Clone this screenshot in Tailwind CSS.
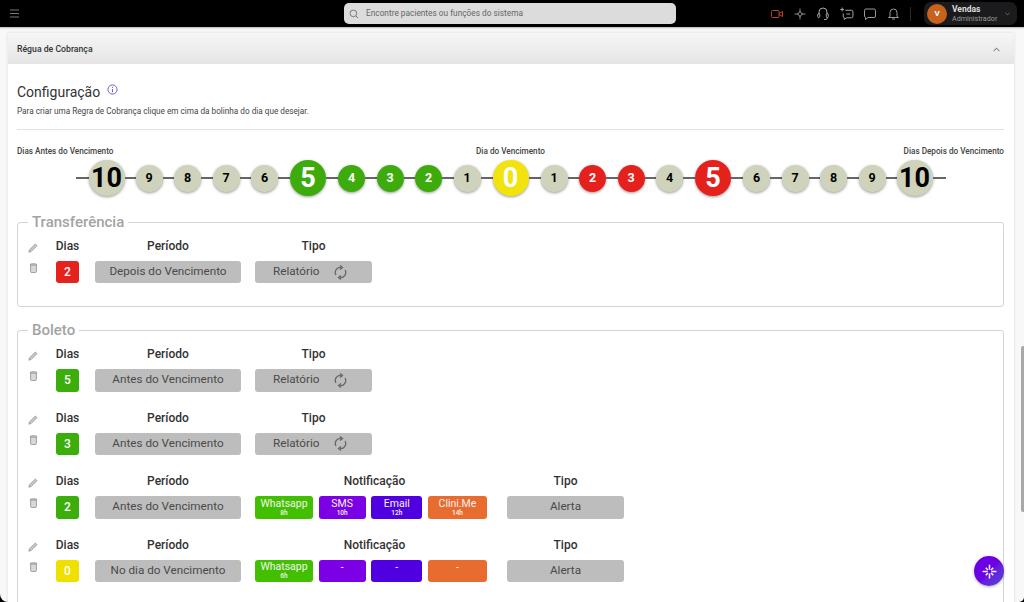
<!DOCTYPE html>
<html lang="pt-BR">
<head>
<meta charset="utf-8">
<title>Régua de Cobrança</title>
<script src="https://cdn.jsdelivr.net/npm/@tailwindcss/browser@4"></script>
</head>
<body class="w-[1024px] h-[602px] overflow-hidden bg-black font-['Roboto',sans-serif]">
<div class="relative flex flex-col h-[602px] overflow-hidden">
  <header class="flex items-center h-[27px] shrink-0 bg-black">
    <svg class="ml-[10px] w-[9px] h-[9px] text-[#777]" viewBox="0 0 9 9" fill="none" stroke="currentColor" stroke-width="1"><path d="M0 1h9M0 4.5h9M0 8h9"/></svg>
    <div class="ml-[325px] flex items-center w-[332px] h-[21px] rounded-[5px] bg-[#dcdcdc] pl-[5px]">
      <svg class="w-[10px] h-[10px] text-[#666]" viewBox="0 0 24 24" fill="none" stroke="currentColor" stroke-width="2"><circle cx="10.5" cy="10.5" r="8"/><path d="M16.5 16.5L22 22"/></svg>
      <span class="ml-[7px] text-[8.3px] text-[#666]">Encontre pacientes ou funções do sistema</span>
    </div>
    <div class="ml-[95px] flex items-center">
      <svg class="w-[12px] h-[10px] text-[#b5432c]" viewBox="0 0 12 10" fill="none" stroke="currentColor" stroke-width="1"><rect x="0.5" y="1.5" width="7.5" height="7" rx="1"/><path d="M8 4.5L11.500 2.500V7.500L8 5.500"/></svg>
      <svg class="ml-[11px] w-[12px] h-[12px] text-[#999]" viewBox="0 0 24 24" fill="none" stroke="currentColor" stroke-width="1.8"><path d="M12 1v5M12 18v5M1 12h5M18 12h5M12 6l2 4 4 2-4 2-2 4-2-4-4-2 4-2z"/></svg>
      <svg class="ml-[11px] w-[12px] h-[13px] text-[#aaa]" viewBox="0 0 24 26" fill="none" stroke="currentColor" stroke-width="2"><path d="M4 15V10a8 8 0 0116 0v5"/><rect x="1.500" y="13" width="4" height="8" rx="2"/><rect x="18.500" y="13" width="4" height="8" rx="2"/><path d="M20.500 21v1a3 3 0 01-3 3H14"/></svg>
      <svg class="ml-[11px] w-[14px] h-[13px] text-[#aaa]" viewBox="0 0 26 24" fill="none" stroke="currentColor" stroke-width="1.800"><path d="M10 6h11a3 3 0 013 3v8a3 3 0 01-3 3H12l-4 3v-3a3 3 0 01-2-3v-5"/><path d="M4 1v7M.5 4.500h7M12 13h7"/></svg>
      <svg class="ml-[10px] w-[12px] h-[12px] text-[#aaa]" viewBox="0 0 24 24" fill="none" stroke="currentColor" stroke-width="1.800"><path d="M4 2h16a3 3 0 013 3v11a3 3 0 01-3 3H8l-5 4v-4.200A3 3 0 011 16V5a3 3 0 013-3z"/></svg>
      <svg class="ml-[12px] w-[11px] h-[12px] text-[#aaa]" viewBox="0 0 22 24" fill="none" stroke="currentColor" stroke-width="1.800"><path d="M4 17V9a7 7 0 0114 0v8l3 2H1zM8 22h6"/></svg>
      <span class="ml-[11px] w-px h-[14px] bg-[#2a2a2a]"></span>
    </div>
    <div class="ml-[13px] flex items-center w-[93px] h-[23px] rounded-[7px] bg-[#1b1b1d] pl-[3px]">
      <span class="flex items-center justify-center w-[20px] h-[20px] rounded-full bg-[#c8621f] text-white text-[8px] font-bold">V</span>
      <div class="ml-[5px] flex flex-col leading-[10px]">
        <span class="text-[8.5px] font-bold text-[#ddd]">Vendas</span>
        <span class="text-[7.200px] text-[#999]">Administrador</span>
      </div>
      <svg class="ml-[8px] w-[5px] h-[4px] text-[#777]" viewBox="0 0 6 4" fill="none" stroke="currentColor" stroke-width="1"><path d="M0.500 0.500L3 3l2.500-2.500"/></svg>
    </div>
  </header>

  <main class="flex-1 min-h-0 bg-[#f8f8f8] rounded-bl-[8px] rounded-br-[5px] pl-[8px] pr-[10px] pt-[6px] overflow-hidden shadow-[inset_0_3px_2px_-2px_rgba(0,0,0,0.25)]">
    <section class="bg-white h-[600px] shadow-[0_0_3px_rgba(0,0,0,0.12)]">
      <div class="flex items-center justify-between h-[31px] pl-[9px] pr-[14px] pt-[2px] bg-gradient-to-b from-[#f6f6f6] to-[#e5e5e5]">
        <h2 class="text-[8.7px] font-medium text-[#333]">Régua de Cobrança</h2>
        <svg class="w-[7px] h-[5px] text-[#888]" viewBox="0 0 8 5" fill="none" stroke="currentColor" stroke-width="1.200"><path d="M0.700 4.300L4 1l3.300 3.300"/></svg>
      </div>
      <div class="px-[9px] pr-[10px]">
        <div class="flex items-center mt-[18px] h-[20px]">
          <h1 class="text-[14px] text-[#333] leading-[20px]">Configuração</h1>
          <svg class="ml-[7px] -mt-[5px] w-[11px] h-[11px] text-[#5a55c8]" viewBox="0 0 12 12" fill="none" stroke="currentColor" stroke-width="1"><circle cx="6" cy="6" r="5"/><path d="M6 5.500V9M6 3v1.200"/></svg>
        </div>
        <p class="mt-[2px] text-[8.2px] leading-[14px] text-[#444]">Para criar uma Regra de Cobrança clique em cima da bolinha do dia que desejar.</p>
        <hr class="mt-[11px] border-t border-[#e2e2e2]">
        <div class="grid grid-cols-3 mt-[16px] text-[8.200px] leading-[10px] font-medium text-[#444]">
          <span>Dias Antes do Vencimento</span>
          <span class="text-center">Dia do Vencimento</span>
          <span class="text-right">Dias Depois do Vencimento</span>
        </div>

        <div class="flex items-center justify-center mt-[4px] h-[36px]">
          <i class="w-[13px] h-[2px] bg-[#666]"></i>
          <span class="flex items-center justify-center w-[36px] h-[36px] rounded-full bg-[#d0d3bb] shadow-[0_1px_3px_rgba(0,0,0,0.4)] text-[27px] font-bold text-black">10</span>
          <i class="w-[11px] h-[2px] bg-[#666]"></i>
          <span class="flex items-center justify-center w-[27px] h-[27px] rounded-full bg-[#d0d3bb] shadow-[0_1px_3px_rgba(0,0,0,0.4)] text-[12.500px] font-bold text-black">9</span>
          <i class="w-[11.500px] h-[2px] bg-[#666]"></i>
          <span class="flex items-center justify-center w-[27px] h-[27px] rounded-full bg-[#d0d3bb] shadow-[0_1px_3px_rgba(0,0,0,0.4)] text-[12.500px] font-bold text-black">8</span>
          <i class="w-[11.500px] h-[2px] bg-[#666]"></i>
          <span class="flex items-center justify-center w-[27px] h-[27px] rounded-full bg-[#d0d3bb] shadow-[0_1px_3px_rgba(0,0,0,0.4)] text-[12.500px] font-bold text-black">7</span>
          <i class="w-[11.500px] h-[2px] bg-[#666]"></i>
          <span class="flex items-center justify-center w-[27px] h-[27px] rounded-full bg-[#d0d3bb] shadow-[0_1px_3px_rgba(0,0,0,0.4)] text-[12.500px] font-bold text-black">6</span>
          <i class="w-[12px] h-[2px] bg-[#666]"></i>
          <span class="flex items-center justify-center w-[36px] h-[36px] rounded-full bg-[#3dab0c] shadow-[0_1px_3px_rgba(0,0,0,0.4)] text-[27px] font-bold text-white">5</span>
          <i class="w-[12px] h-[2px] bg-[#666]"></i>
          <span class="flex items-center justify-center w-[27px] h-[27px] rounded-full bg-[#3dab0c] shadow-[0_1px_3px_rgba(0,0,0,0.4)] text-[12.500px] font-bold text-white">4</span>
          <i class="w-[11.500px] h-[2px] bg-[#666]"></i>
          <span class="flex items-center justify-center w-[27px] h-[27px] rounded-full bg-[#3dab0c] shadow-[0_1px_3px_rgba(0,0,0,0.4)] text-[12.500px] font-bold text-white">3</span>
          <i class="w-[11.500px] h-[2px] bg-[#666]"></i>
          <span class="flex items-center justify-center w-[27px] h-[27px] rounded-full bg-[#3dab0c] shadow-[0_1px_3px_rgba(0,0,0,0.4)] text-[12.500px] font-bold text-white">2</span>
          <i class="w-[11.500px] h-[2px] bg-[#666]"></i>
          <span class="flex items-center justify-center w-[27px] h-[27px] rounded-full bg-[#d0d3bb] shadow-[0_1px_3px_rgba(0,0,0,0.4)] text-[12.500px] font-bold text-black">1</span>
          <i class="w-[12px] h-[2px] bg-[#666]"></i>
          <span class="flex items-center justify-center w-[36px] h-[36px] rounded-full bg-[#f2e30c] shadow-[0_1px_3px_rgba(0,0,0,0.4)] text-[27px] font-bold text-white">0</span>
          <i class="w-[12px] h-[2px] bg-[#666]"></i>
          <span class="flex items-center justify-center w-[27px] h-[27px] rounded-full bg-[#d0d3bb] shadow-[0_1px_3px_rgba(0,0,0,0.4)] text-[12.500px] font-bold text-black">1</span>
          <i class="w-[11.500px] h-[2px] bg-[#666]"></i>
          <span class="flex items-center justify-center w-[27px] h-[27px] rounded-full bg-[#e5211d] shadow-[0_1px_3px_rgba(0,0,0,0.4)] text-[12.500px] font-bold text-white">2</span>
          <i class="w-[11.500px] h-[2px] bg-[#666]"></i>
          <span class="flex items-center justify-center w-[27px] h-[27px] rounded-full bg-[#e5211d] shadow-[0_1px_3px_rgba(0,0,0,0.4)] text-[12.500px] font-bold text-white">3</span>
          <i class="w-[11.500px] h-[2px] bg-[#666]"></i>
          <span class="flex items-center justify-center w-[27px] h-[27px] rounded-full bg-[#d0d3bb] shadow-[0_1px_3px_rgba(0,0,0,0.4)] text-[12.500px] font-bold text-black">4</span>
          <i class="w-[12px] h-[2px] bg-[#666]"></i>
          <span class="flex items-center justify-center w-[36px] h-[36px] rounded-full bg-[#e5211d] shadow-[0_1px_3px_rgba(0,0,0,0.4)] text-[27px] font-bold text-white">5</span>
          <i class="w-[12px] h-[2px] bg-[#666]"></i>
          <span class="flex items-center justify-center w-[27px] h-[27px] rounded-full bg-[#d0d3bb] shadow-[0_1px_3px_rgba(0,0,0,0.4)] text-[12.500px] font-bold text-black">6</span>
          <i class="w-[11.500px] h-[2px] bg-[#666]"></i>
          <span class="flex items-center justify-center w-[27px] h-[27px] rounded-full bg-[#d0d3bb] shadow-[0_1px_3px_rgba(0,0,0,0.4)] text-[12.500px] font-bold text-black">7</span>
          <i class="w-[11.500px] h-[2px] bg-[#666]"></i>
          <span class="flex items-center justify-center w-[27px] h-[27px] rounded-full bg-[#d0d3bb] shadow-[0_1px_3px_rgba(0,0,0,0.4)] text-[12.500px] font-bold text-black">8</span>
          <i class="w-[11.500px] h-[2px] bg-[#666]"></i>
          <span class="flex items-center justify-center w-[27px] h-[27px] rounded-full bg-[#d0d3bb] shadow-[0_1px_3px_rgba(0,0,0,0.4)] text-[12.500px] font-bold text-black">9</span>
          <i class="w-[11px] h-[2px] bg-[#666]"></i>
          <span class="flex items-center justify-center w-[36px] h-[36px] rounded-full bg-[#d0d3bb] shadow-[0_1px_3px_rgba(0,0,0,0.4)] text-[27px] font-bold text-black">10</span>
          <i class="w-[13px] h-[2px] bg-[#666]"></i>
        </div>

        <fieldset class="mt-[16px] h-[95px] border border-[#d4d4d4] rounded-[3px] pl-[9px]">
          <legend class="ml-[1px] px-[4px] text-[15px] leading-[20px] font-medium text-[#a3a3a3]">Transferência</legend>
          <div class="flex h-[47px] mt-[4px]">
            <div class="flex flex-col items-center w-[12px] mr-[17px] pt-[7px]">
              <svg class="w-[10px] h-[10px] text-[#8f8f8f]" viewBox="0 0 12 12" fill="#c9c9c9" stroke="currentColor" stroke-width="0.900"><path d="M8.800 1.200l2 2-7 7L1 11l.800-2.800z"/></svg>
              <svg class="mt-[10px] w-[9px] h-[10px] text-[#8f8f8f]" viewBox="0 0 10 12" fill="#d8d8d8" stroke="currentColor" stroke-width="1"><path d="M1.500 2.500h7v7.500a1.500 1.500 0 01-1.500 1.500H3A1.500 1.500 0 011.500 10zM1 2.500a1.500 1.500 0 011.500-1.500h5A1.500 1.500 0 019 2.500"/></svg>
            </div>
            <div class="flex flex-col items-center w-[23px] mr-[16px]"><span class="h-[21px] leading-[21px] text-[12px] font-medium text-[#333]">Dias</span><span class="flex items-center justify-center mt-[4px] w-[23px] h-[23px] rounded-[3px] bg-[#e5231e] text-white text-[12px] font-medium">2</span></div>
            <div class="flex flex-col items-center w-[146px] mr-[14px]"><span class="h-[21px] leading-[21px] text-[12px] font-medium text-[#333]">Período</span><span class="flex items-center justify-center mt-[4px] w-full h-[23px] rounded-[3px] bg-[#bdbdbd] text-[#4a4a4a] text-[11.700px]">Depois do Vencimento</span></div>
            <div class="flex flex-col items-center w-[117px]"><span class="h-[21px] leading-[21px] text-[12px] font-medium text-[#333]">Tipo</span><span class="flex items-center gap-[15px] pl-[18px] mt-[4px] w-full h-[23px] rounded-[3px] bg-[#bdbdbd] text-[#4a4a4a] text-[11.700px]">Relatório<svg class="w-[13px] h-[15px] text-[#666]" viewBox="0 0 13 15" fill="none" stroke="currentColor" stroke-width="1.300"><path d="M2 10A5 5 0 0 1 7 2.500"/><path d="M6 .5l2.500 2-2.500 2" /><path d="M11 5A5 5 0 0 1 6 12.500"/><path d="M7 10.500l-2.500 2 2.500 2"/></svg></span></div>
          </div>
        </fieldset>

        <fieldset class="mt-[13px] h-[300px] border border-[#d4d4d4] rounded-[3px] pl-[9px]">
          <legend class="ml-[1px] px-[4px] text-[15px] leading-[20px] font-medium text-[#a3a3a3]">Boleto</legend>
          <div class="flex flex-col gap-[16px] mt-[4px]">

          <div class="flex h-[47.500px]">
            <div class="flex flex-col items-center w-[12px] mr-[17px] pt-[7px]">
              <svg class="w-[10px] h-[10px] text-[#8f8f8f]" viewBox="0 0 12 12" fill="#c9c9c9" stroke="currentColor" stroke-width="0.900"><path d="M8.800 1.200l2 2-7 7L1 11l.800-2.800z"/></svg>
              <svg class="mt-[10px] w-[9px] h-[10px] text-[#8f8f8f]" viewBox="0 0 10 12" fill="#d8d8d8" stroke="currentColor" stroke-width="1"><path d="M1.500 2.500h7v7.500a1.500 1.500 0 01-1.500 1.500H3A1.500 1.500 0 011.500 10zM1 2.500a1.500 1.500 0 011.500-1.500h5A1.500 1.500 0 019 2.500"/></svg>
            </div>
            <div class="flex flex-col items-center w-[23px] mr-[16px]"><span class="h-[21px] leading-[21px] text-[12px] font-medium text-[#333]">Dias</span><span class="flex items-center justify-center mt-[4px] w-[23px] h-[23px] rounded-[3px] bg-[#3cae0b] text-white text-[12px] font-medium">5</span></div>
            <div class="flex flex-col items-center w-[146px] mr-[14px]"><span class="h-[21px] leading-[21px] text-[12px] font-medium text-[#333]">Período</span><span class="flex items-center justify-center mt-[4px] w-full h-[23px] rounded-[3px] bg-[#bdbdbd] text-[#4a4a4a] text-[11.700px]">Antes do Vencimento</span></div>
            <div class="flex flex-col items-center w-[117px]"><span class="h-[21px] leading-[21px] text-[12px] font-medium text-[#333]">Tipo</span><span class="flex items-center gap-[15px] pl-[18px] mt-[4px] w-full h-[23px] rounded-[3px] bg-[#bdbdbd] text-[#4a4a4a] text-[11.700px]">Relatório<svg class="w-[13px] h-[15px] text-[#666]" viewBox="0 0 13 15" fill="none" stroke="currentColor" stroke-width="1.300"><path d="M2 10A5 5 0 0 1 7 2.500"/><path d="M6 .5l2.500 2-2.500 2" /><path d="M11 5A5 5 0 0 1 6 12.500"/><path d="M7 10.500l-2.500 2 2.500 2"/></svg></span></div>
          </div>

          <div class="flex h-[47.500px]">
            <div class="flex flex-col items-center w-[12px] mr-[17px] pt-[7px]">
              <svg class="w-[10px] h-[10px] text-[#8f8f8f]" viewBox="0 0 12 12" fill="#c9c9c9" stroke="currentColor" stroke-width="0.900"><path d="M8.800 1.200l2 2-7 7L1 11l.800-2.800z"/></svg>
              <svg class="mt-[10px] w-[9px] h-[10px] text-[#8f8f8f]" viewBox="0 0 10 12" fill="#d8d8d8" stroke="currentColor" stroke-width="1"><path d="M1.500 2.500h7v7.500a1.500 1.500 0 01-1.500 1.500H3A1.500 1.500 0 011.500 10zM1 2.500a1.500 1.500 0 011.500-1.500h5A1.500 1.500 0 019 2.500"/></svg>
            </div>
            <div class="flex flex-col items-center w-[23px] mr-[16px]"><span class="h-[21px] leading-[21px] text-[12px] font-medium text-[#333]">Dias</span><span class="flex items-center justify-center mt-[4px] w-[23px] h-[23px] rounded-[3px] bg-[#3cae0b] text-white text-[12px] font-medium">3</span></div>
            <div class="flex flex-col items-center w-[146px] mr-[14px]"><span class="h-[21px] leading-[21px] text-[12px] font-medium text-[#333]">Período</span><span class="flex items-center justify-center mt-[4px] w-full h-[23px] rounded-[3px] bg-[#bdbdbd] text-[#4a4a4a] text-[11.700px]">Antes do Vencimento</span></div>
            <div class="flex flex-col items-center w-[117px]"><span class="h-[21px] leading-[21px] text-[12px] font-medium text-[#333]">Tipo</span><span class="flex items-center gap-[15px] pl-[18px] mt-[4px] w-full h-[23px] rounded-[3px] bg-[#bdbdbd] text-[#4a4a4a] text-[11.700px]">Relatório<svg class="w-[13px] h-[15px] text-[#666]" viewBox="0 0 13 15" fill="none" stroke="currentColor" stroke-width="1.300"><path d="M2 10A5 5 0 0 1 7 2.500"/><path d="M6 .5l2.500 2-2.500 2" /><path d="M11 5A5 5 0 0 1 6 12.500"/><path d="M7 10.500l-2.500 2 2.500 2"/></svg></span></div>
          </div>

          <div class="flex h-[47.500px]">
            <div class="flex flex-col items-center w-[12px] mr-[17px] pt-[7px]">
              <svg class="w-[10px] h-[10px] text-[#8f8f8f]" viewBox="0 0 12 12" fill="#c9c9c9" stroke="currentColor" stroke-width="0.900"><path d="M8.800 1.200l2 2-7 7L1 11l.800-2.800z"/></svg>
              <svg class="mt-[10px] w-[9px] h-[10px] text-[#8f8f8f]" viewBox="0 0 10 12" fill="#d8d8d8" stroke="currentColor" stroke-width="1"><path d="M1.500 2.500h7v7.500a1.500 1.500 0 01-1.500 1.500H3A1.500 1.500 0 011.500 10zM1 2.500a1.500 1.500 0 011.500-1.500h5A1.500 1.500 0 019 2.500"/></svg>
            </div>
            <div class="flex flex-col items-center w-[23px] mr-[16px]"><span class="h-[21px] leading-[21px] text-[12px] font-medium text-[#333]">Dias</span><span class="flex items-center justify-center mt-[4px] w-[23px] h-[23px] rounded-[3px] bg-[#3cae0b] text-white text-[12px] font-medium">2</span></div>
            <div class="flex flex-col items-center w-[146px] mr-[14px]"><span class="h-[21px] leading-[21px] text-[12px] font-medium text-[#333]">Período</span><span class="flex items-center justify-center mt-[4px] w-full h-[23px] rounded-[3px] bg-[#bdbdbd] text-[#4a4a4a] text-[11.700px]">Antes do Vencimento</span></div>
            <div class="flex flex-col items-center w-[232px] mr-[20px]"><span class="h-[21px] leading-[21px] pl-[7px] text-[12px] font-medium text-[#333]">Notificação</span>
              <div class="flex mt-[4px] w-full h-[23px] justify-between text-[#f3f3f3]">
                <span class="flex flex-col items-center justify-center w-[58px] rounded-[3px] bg-[#42c000]"><span class="text-[10.500px] leading-[11px]">Whatsapp</span><span class="text-[6.500px] leading-[8px] font-medium">8h</span></span>
                <span class="flex flex-col items-center justify-center w-[47px] rounded-[3px] bg-[#7b00e6]"><span class="text-[10.500px] leading-[11px]">SMS</span><span class="text-[6.500px] leading-[8px] font-medium">10h</span></span>
                <span class="flex flex-col items-center justify-center w-[51px] rounded-[3px] bg-[#5000e0]"><span class="text-[10.500px] leading-[11px]">Email</span><span class="text-[6.500px] leading-[8px] font-medium">12h</span></span>
                <span class="flex flex-col items-center justify-center w-[59px] rounded-[3px] bg-[#e86c30]"><span class="text-[10.500px] leading-[11px]">Clini.Me</span><span class="text-[6.500px] leading-[8px] font-medium">14h</span></span>
              </div>
            </div>
            <div class="flex flex-col items-center w-[117px]"><span class="h-[21px] leading-[21px] text-[12px] font-medium text-[#333]">Tipo</span><span class="flex items-center justify-center mt-[4px] w-full h-[23px] rounded-[3px] bg-[#bdbdbd] text-[#4a4a4a] text-[11.700px]">Alerta</span></div>
          </div>

          <div class="flex h-[47.500px]">
            <div class="flex flex-col items-center w-[12px] mr-[17px] pt-[7px]">
              <svg class="w-[10px] h-[10px] text-[#8f8f8f]" viewBox="0 0 12 12" fill="#c9c9c9" stroke="currentColor" stroke-width="0.900"><path d="M8.800 1.200l2 2-7 7L1 11l.800-2.800z"/></svg>
              <svg class="mt-[10px] w-[9px] h-[10px] text-[#8f8f8f]" viewBox="0 0 10 12" fill="#d8d8d8" stroke="currentColor" stroke-width="1"><path d="M1.500 2.500h7v7.500a1.500 1.500 0 01-1.500 1.500H3A1.500 1.500 0 011.500 10zM1 2.500a1.500 1.500 0 011.500-1.500h5A1.500 1.500 0 019 2.500"/></svg>
            </div>
            <div class="flex flex-col items-center w-[23px] mr-[16px]"><span class="h-[21px] leading-[21px] text-[12px] font-medium text-[#333]">Dias</span><span class="flex items-center justify-center mt-[4px] w-[23px] h-[23px] rounded-[3px] bg-[#f0e000] text-white text-[12px] font-medium">0</span></div>
            <div class="flex flex-col items-center w-[146px] mr-[14px]"><span class="h-[21px] leading-[21px] text-[12px] font-medium text-[#333]">Período</span><span class="flex items-center justify-center mt-[4px] w-full h-[23px] rounded-[3px] bg-[#bdbdbd] text-[#4a4a4a] text-[11.700px]">No dia do Vencimento</span></div>
            <div class="flex flex-col items-center w-[232px] mr-[20px]"><span class="h-[21px] leading-[21px] pl-[7px] text-[12px] font-medium text-[#333]">Notificação</span>
              <div class="flex mt-[4px] w-full h-[23px] justify-between text-[#f3f3f3]">
                <span class="flex flex-col items-center justify-center w-[58px] rounded-[3px] bg-[#42c000]"><span class="text-[10.500px] leading-[11px]">Whatsapp</span><span class="text-[6.500px] leading-[8px] font-medium">6h</span></span>
                <span class="flex flex-col items-center pt-[2px] w-[47px] rounded-[3px] bg-[#7b00e6]"><span class="text-[10.500px] leading-[11px]">-</span></span>
                <span class="flex flex-col items-center pt-[2px] w-[51px] rounded-[3px] bg-[#5000e0]"><span class="text-[10.500px] leading-[11px]">-</span></span>
                <span class="flex flex-col items-center pt-[2px] w-[59px] rounded-[3px] bg-[#e86c30]"><span class="text-[10.500px] leading-[11px]">-</span></span>
              </div>
            </div>
            <div class="flex flex-col items-center w-[117px]"><span class="h-[21px] leading-[21px] text-[12px] font-medium text-[#333]">Tipo</span><span class="flex items-center justify-center mt-[4px] w-full h-[23px] rounded-[3px] bg-[#bdbdbd] text-[#4a4a4a] text-[11.700px]">Alerta</span></div>
          </div>

          </div>
        </fieldset>
      </div>
    </section>
  </main>

  <div class="absolute right-0 top-[346px] w-[3px] h-[166px] rounded-l-[2px] bg-[#a8a8a8]"></div>
  <button class="absolute left-[974px] top-[556px] flex items-center justify-center w-[30px] h-[30px] rounded-full bg-gradient-to-br from-[#6d00e2] from-50% to-[#4a45d0] shadow-[0_1px_3px_rgba(0,0,0,0.3)]">
    <svg class="w-[15px] h-[15px] text-white" viewBox="0 0 24 24" fill="none" stroke="currentColor" stroke-width="2.400"><path d="M12 1v8M12 15v8M1 12h8M15 12h8M6 6l3.500 3.500M18 18l-3.500-3.500M18 6l-3.500 3.500M6 18l3.500-3.500"/></svg>
  </button>
</div>
</body>
</html>
